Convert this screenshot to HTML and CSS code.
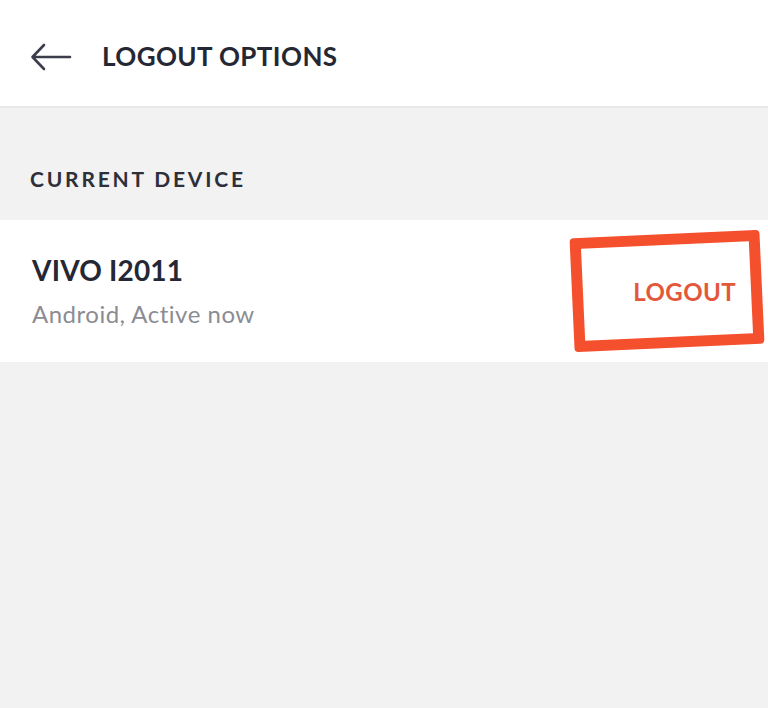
FILE: index.html
```html
<!DOCTYPE html>
<html>
<head>
<meta charset="utf-8">
<link rel="stylesheet" href="styles.css">
</head>
<body>
<header class="topbar">
  <svg class="back" width="42" height="28" viewBox="0 0 42 28">
    <path d="M40 14 H3 M14 2 L2.5 14 L14 26" fill="none" stroke="#3b3e4a" stroke-width="2.6" stroke-linecap="round" stroke-linejoin="round"/>
  </svg>
  <h1 class="title">LOGOUT OPTIONS</h1>
</header>
<main class="content">
  <div class="section-label">CURRENT DEVICE</div>
  <div class="device-row">
    <div class="device-info">
      <div class="device-name">VIVO I2011</div>
      <div class="device-meta">Android, Active now</div>
    </div>
    <div class="logout-wrap">
      <button class="logout">LOGOUT</button>
      <div class="highlight"></div>
    </div>
  </div>
</main>
</body>
</html>
```
FILE: styles.css
```css
html, body {
  margin: 0;
  padding: 0;
}
body {
  width: 768px;
  height: 708px;
  background: #f2f2f2;
  font-family: "Lato", "Open Sans", sans-serif;
  overflow: hidden;
}
.topbar {
  background: #ffffff;
  border-bottom: 2px solid #e8e8e8;
  display: flex;
  align-items: center;
  padding-left: 30px;
  padding-top: 6px;
  height: 100px;
}
.back {
  display: block;
  margin-right: 30px;
  margin-top: 2px;
}
.title {
  margin: 0;
  font-size: 26px;
  font-weight: 700;
  color: #252834;
  letter-spacing: 0.4px;
}
.section-label {
  height: 112px;
  box-sizing: border-box;
  display: flex;
  align-items: center;
  padding-left: 30px;
  padding-top: 28px;
  font-size: 21px;
  font-weight: 700;
  color: #2d3039;
  letter-spacing: 2.8px;
}
.device-row {
  height: 142px;
  background: #ffffff;
  display: flex;
  align-items: center;
  justify-content: space-between;
  padding-left: 32px;
}
.device-info {
  margin-top: -1px;
}
.device-name {
  font-size: 28px;
  font-weight: 700;
  color: #252834;
  letter-spacing: 0.2px;
}
.device-meta {
  margin-top: 12px;
  font-size: 24px;
  color: #8b8c93;
  letter-spacing: 0.5px;
}
.logout-wrap {
  position: relative;
  width: 200px;
  height: 142px;
  display: flex;
  align-items: center;
  justify-content: flex-end;
}
.logout {
  border: none;
  background: none;
  padding: 0 32px 0 0;
  font-family: inherit;
  font-size: 24px;
  font-weight: 700;
  color: #e3573b;
  letter-spacing: 0.4px;
}
.highlight {
  position: absolute;
  left: 4px;
  top: 14px;
  width: 168px;
  height: 92px;
  border: 11px solid #f5502e;
  border-radius: 4px;
  transform: rotate(-2.6deg);
}
```
